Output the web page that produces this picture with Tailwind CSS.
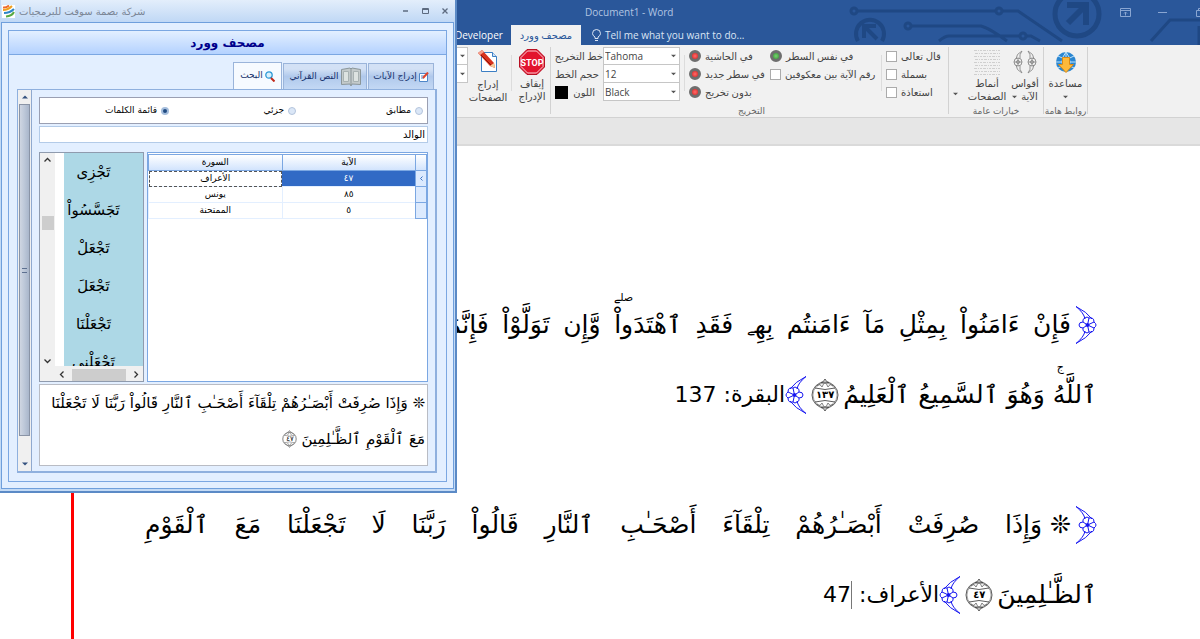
<!DOCTYPE html>
<html lang="ar">
<head>
    <meta charset="UTF-8">
    <meta name="viewport" content="width=device-width, initial-scale=1.0">
    <title>Document1 - Word</title>
    <script src="https://cdn.jsdelivr.net/npm/@tailwindcss/browser@4"></script>
</head>
<body class="h-screen overflow-hidden flex flex-col bg-white font-['Open_Sans','DejaVu_Sans',sans-serif] text-black">
    <svg class="hidden">
        <!-- ornate bracket around a verse -->
        <symbol id="bracket" viewBox="0 0 22 38">
            <g fill="none" stroke="#1414f0" stroke-width="1">
                <path d="M1 .5Q12 6 17 13M1 .5Q9 7 10 13M1 37.500Q12 32 17 25M1 37.500Q9 31 10 25"/>
                <path d="M10 12q2-2 4 0q5-1 5 4q4 3 0 6q0 5-5 4q-2 2-4 0q-3-1-2-4q-4 0-4-3t4-3q-1-3 2-4z"/>
                <circle cx="12.500" cy="19" r="1.500" fill="#1414f0"/>
                <path d="M12.500 19L8 16M12.500 19L8 22M12.500 19L14 12M12.500 19L14 26M12.500 19L19 16M12.500 19L19 22"/>
            </g>
        </symbol>
        <!-- verse number medallion -->
        <symbol id="medallion" viewBox="0 0 28 34">
            <g fill="none" stroke="#333" stroke-width=".8">
                <circle cx="14" cy="17" r="13"/>
                <circle cx="14" cy="17" r="12" stroke-width=".4"/>
                <path d="M4 10Q14 13 24 10M4 24Q14 21 24 24M10 4.500Q13 4 14 1Q15 4 18 4.500M10 29.500Q13 30 14 33Q15 30 18 29.500"/>
                <path d="M6 8q3-3 5 1q2-5 3-4q1-1 3 4q2-4 5-1M6 26q3 3 5-1q2 5 3 4q1 1 3-4q2 4 5 1" stroke-width=".6"/>
            </g>
        </symbol>
        <symbol id="arrow" viewBox="0 0 6 4"><path d="M0 .5h6L3 3.500z" fill="#555"/></symbol>
    </svg>

    <!-- title bar and ribbon tabs -->
    <header class="relative shrink-0 h-[45px] bg-[#2a579a] pl-[455px] text-white">
        <svg class="absolute right-0 top-0" width="370" height="45" viewBox="0 0 370 45" fill="none" stroke="#1f4884" stroke-width="3">
            <circle cx="24" cy="11" r="3"/>
            <path d="M27 11h138M172 11h16L232 41"/>
            <circle cx="169" cy="11" r="3"/>
            <circle cx="78" cy="26" r="3"/>
            <path d="M81 26h70q8 2 26 15M109 41q6-5 10-5h70M196 36h5l9 5"/>
            <circle cx="193" cy="36" r="3"/>
            <path d="M28 41a14 14 0 1 1 24 0" stroke-width="4"/>
            <path d="M34 38V26h12M35 27l12 12" stroke-width="4"/>
            <circle cx="247" cy="14" r="22" stroke-width="5"/>
            <path d="M237 5h19v20M255 6L238 23" stroke-width="6"/>
            <path d="M321 41l19-21h30"/>
            <path d="M369 26v19"/>
        </svg>
        <div class="relative flex items-center h-[25px] text-xs">
            <span class="flex-1 pl-[130px] text-[10px] text-[#b3c5e2]">Document1 - Word</span>
            <div class="flex items-center">
                <button aria-label="Ribbon display options" class="w-[38px]"><svg width="11" height="9" viewBox="0 0 11 9" fill="none" stroke="#8aa6d2"><path d="M.5.5h10v8H.5zM.5 2.500h10M5.500 7.500V4M4 5.500L5.500 4L7 5.500"/></svg></button>
                <button aria-label="Minimize" class="w-[38px]"><svg width="9" height="3"><path d="M0 1.500h9" stroke="#8aa6d2"/></svg></button>
                <button aria-label="Restore" class="w-[4px] overflow-hidden"><svg width="9" height="9" fill="none" stroke="#8aa6d2"><path d="M.5 2.500h6v6h-6zM2.500 2V.5h6v6h-2"/></svg></button>
            </div>
        </div>
        <nav class="relative flex h-5 items-center text-[10px] whitespace-nowrap">
            <a href="#" class="w-14">Developer</a>
            <a href="#" dir="rtl" class="flex h-full w-[70px] items-center justify-center bg-[#f1f1f1] text-[10px] text-[#2a579a]">مصحف وورد</a>
            <a href="#" class="ml-[11px] flex items-center gap-1 text-[#dbe5f4]">
                <svg width="9" height="13" viewBox="0 0 9 13" fill="none" stroke="currentColor"><path d="M3 9.500V8Q.5 6.500.5 4.500a4 4 0 0 1 8 0Q8.500 6.500 6 8V9.500zM3 11.500h3"/></svg>
                Tell me what you want to do...
            </a>
        </nav>
    </header>

    <!-- ribbon -->
    <section class="flex shrink-0 h-[73px] border-b border-[#d2d2d2] bg-[#f1f1f1] pl-[457px] pt-[2px] text-[10px] text-[#444] whitespace-nowrap">
        <div class="w-[11px] shrink-0">
            <button aria-label="Options" class="flex h-[18px] w-full items-center justify-center border border-l-0 border-[#c6c6c6] bg-white"><svg width="5" height="4"><use href="#arrow"/></svg></button>
            <button aria-label="More options" class="flex h-[18px] w-full items-center justify-center border border-t-0 border-l-0 border-[#c6c6c6] bg-white"><svg width="5" height="4"><use href="#arrow"/></svg></button>
        </div>
        <button class="flex w-10 shrink-0 flex-col items-center pt-[3px] leading-[13px]">
            <svg class="mb-[5px]" width="20" height="23" viewBox="0 0 20 23">
                <path d="M3.500 2.500h11l4 4v15h-15z" fill="#fff" stroke="#3c7fc4"/>
                <path d="M14.500 2.500v4h4" fill="#cfe2f5" stroke="#3c7fc4"/>
                <path d="M0 3l4-3L16 13l1 5l-5-2z" fill="#d8321e"/><path d="M0 3l4-3l2 2l-4 3z" fill="#f4a08c"/>
                <path d="M12 16l4-3l1 5z" fill="#f3cf9c"/><path d="M3 5l10 10" stroke="#8d1508"/>
            </svg>
            <span>إدراج</span><span>الصفحات</span>
        </button>
        <span class="mr-1 ml-[3px] mt-2 h-9 w-px bg-[#dcdcdc]"></span>
        <button class="flex w-8 shrink-0 flex-col items-center pt-[2px] leading-[13px]">
            <svg class="mb-[2px]" width="26" height="26" viewBox="0 0 26 26">
                <path d="M8 .5h10L25.500 8v10L18 25.500H8L.5 18V8z" fill="#e2142d" stroke="#b70f22"/>
                <path d="M8.500 2h9L24 8.500v9L17.500 24h-9L2 17.500v-9z" fill="none" stroke="#fff" stroke-width=".8"/>
                <text x="13" y="16.500" text-anchor="middle" font-family="Roboto" font-weight="700" font-size="9" fill="#fff">STOP</text>
            </svg>
            <span>إيقاف</span><span>الإدراج</span>
        </button>
        <span class="mr-1 ml-0.5 h-[67px] w-px bg-[#d2d2d2]"></span>

        <div class="flex w-[393px] shrink-0 flex-col">
            <div class="flex h-[54px]">
                <div class="grid w-[125px] shrink-0 grid-cols-[48px_77px] grid-rows-3">
                    <label for="font" dir="rtl" class="flex items-center">خط التخريج</label>
                    <div class="relative">
                        <select id="font" class="block h-[18px] w-full appearance-none border border-[#c6c6c6] bg-white px-px text-[10px] leading-4"><option>Tahoma</option></select>
                        <svg class="pointer-events-none absolute top-[7px] right-1" width="5" height="4"><use href="#arrow"/></svg>
                    </div>
                    <label for="size" dir="rtl" class="flex items-center pr-1">حجم الخط</label>
                    <div class="relative">
                        <select id="size" class="block h-[18px] w-full appearance-none border border-t-0 border-[#c6c6c6] bg-white px-px text-[10px] leading-4"><option>12</option></select>
                        <svg class="pointer-events-none absolute top-[7px] right-1" width="5" height="4"><use href="#arrow"/></svg>
                    </div>
                    <label for="color" dir="rtl" class="flex items-center justify-between pr-2"><span>اللون</span><span class="size-[13px] bg-black"></span></label>
                    <div class="relative">
                        <select id="color" class="block h-[18px] w-full appearance-none border border-t-0 border-[#c6c6c6] bg-white px-px text-[10px] leading-4"><option>Black</option></select>
                        <svg class="pointer-events-none absolute top-[7px] right-1" width="5" height="4"><use href="#arrow"/></svg>
                    </div>
                </div>
                <span class="mx-1 mt-2 h-9 w-px bg-[#dcdcdc]"></span>
                <div class="grid w-[81px] shrink-0 grid-rows-3">
                    <label class="flex items-center gap-1"><input type="radio" name="place" class="size-3 shrink-0 appearance-none rounded-full border-3 border-[#6e6e6e] bg-radial from-[#ff6a6a] to-[#d8131b]">في الحاشية</label>
                    <label class="flex items-center gap-1"><input type="radio" name="place" class="size-3 shrink-0 appearance-none rounded-full border-3 border-[#6e6e6e] bg-radial from-[#ff6a6a] to-[#d8131b]">في سطر جديد</label>
                    <label class="flex items-center gap-1"><input type="radio" name="place" class="size-3 shrink-0 appearance-none rounded-full border-3 border-[#6e6e6e] bg-radial from-[#ff6a6a] to-[#d8131b]">بدون تخريج</label>
                </div>
                <div class="grid w-[111px] shrink-0 grid-rows-3">
                    <label class="flex items-center gap-1"><input type="radio" name="place" checked class="size-3 shrink-0 appearance-none rounded-full border-3 border-[#6e6e6e] bg-radial from-[#7ad070] to-[#2f9a35]">في نفس السطر</label>
                    <label class="flex items-center gap-1"><input type="checkbox" class="size-[11px] shrink-0 appearance-none border border-[#ababab] bg-white">رقم الآية بين معكوفين</label>
                </div>
                <span class="mr-1 mt-2 h-9 w-px bg-[#dcdcdc]"></span>
                <div class="grid shrink-0 grid-rows-3">
                    <label class="flex items-center gap-1"><input type="checkbox" class="size-[11px] shrink-0 appearance-none border border-[#ababab] bg-white">قال تعالى</label>
                    <label class="flex items-center gap-1"><input type="checkbox" class="size-[11px] shrink-0 appearance-none border border-[#ababab] bg-white">بسملة</label>
                    <label class="flex items-center gap-1"><input type="checkbox" class="size-[11px] shrink-0 appearance-none border border-[#ababab] bg-white">استعاذة</label>
                </div>
            </div>
            <span class="text-center text-[9px] leading-5 text-[#666]">التخريج</span>
        </div>
        <span class="h-[67px] w-px bg-[#d2d2d2]"></span>

        <div class="flex w-[94px] shrink-0 flex-col">
            <div class="flex h-[56px] pl-1">
                <span class="flex w-3 items-end pb-[7px]"><svg width="5" height="4"><use href="#arrow"/></svg></span>
                <button class="flex w-[44px] flex-col items-center pt-[2px] leading-[13px]">
                    <svg class="mb-[2px]" width="26" height="26" viewBox="0 0 26 26" stroke="#cfcfcf" stroke-dasharray="3 1 1 1 2 1"><path d="M0 1.500h26M1 4.500h25M0 7.500h26M1 10.500h25M0 13.500h26M1 16.500h25M0 19.500h26M1 22.500h25M0 25.500h26"/></svg>
                    <span>أنماط</span><span>الصفحات</span>
                </button>
                <button class="flex w-[32px] flex-col items-center pt-[2px] leading-[13px]">
                    <svg class="mb-[2px]" width="24" height="26" viewBox="0 0 24 26" fill="none" stroke="#888" stroke-width=".9">
                        <path d="M9 2Q3 5 3 10M3 16Q3 21 9 24M9 2Q6 6 7 9M7 17Q6 20 9 24M15 2Q21 5 21 10M21 16Q21 21 15 24M15 2Q18 6 17 9M17 17Q18 20 15 24"/>
                        <circle cx="5" cy="13" r="4"/><circle cx="19" cy="13" r="4"/><circle cx="5" cy="13" r="1.500"/><circle cx="19" cy="13" r="1.500"/>
                        <path d="M1 13h8M5 9v8M15 13h8M19 9v8"/>
                    </svg>
                    <span>أقواس</span><span class="flex items-center gap-1"><svg width="5" height="4"><use href="#arrow"/></svg>الآية</span>
                </button>
            </div>
            <span class="text-center text-[9px] leading-4 text-[#666]">خيارات عامة</span>
        </div>
        <span class="h-[67px] w-px bg-[#d2d2d2]"></span>

        <div class="flex w-[43px] shrink-0 flex-col">
            <button class="flex h-[56px] shrink-0 flex-col items-center pt-1 leading-[13px]">
                <svg class="mb-1 shrink-0" width="22" height="22" viewBox="0 0 22 22">
                    <circle cx="11" cy="11" r="10" fill="#2a86d1"/>
                    <path d="M1 11h20M11 1v20M3 5q8 5 16 0M3 17q8-5 16 0M11 1Q3 11 11 21Q19 11 11 1" fill="none" stroke="#bfe3fa"/>
                    <path d="M7.500 6.500h7v7h4L11 21.500L3.500 13.500h4z" fill="#fdb93a" stroke="#d98914"/>
                </svg>
                <span>مساعدة</span><span class="flex h-[13px] items-center"><svg width="5" height="4"><use href="#arrow"/></svg></span>
            </button>
            <span class="text-center text-[9px] leading-4 text-[#666]">روابط هامة</span>
        </div>
        <span class="h-[67px] w-px bg-[#d2d2d2]"></span>
    </section>
    <div class="h-7 shrink-0 border-b-2 border-[#dadada] bg-[#e6e6e6]"></div>

    <!-- document page -->
    <main dir="rtl" class="ml-[71px] flex-1 border-l-3 border-[#ff0000] pr-[103px] pl-[71px] pt-36 font-['DejaVu_Sans',sans-serif] text-[25px] leading-[70px] whitespace-nowrap">
        <div class="flex h-[70px] items-center gap-1">
            <svg class="shrink-0" width="22" height="38"><use href="#bracket"/></svg>
            <p class="flex flex-1 justify-between"><span>فَإِنْ</span> <span>ءَامَنُواْ</span> <span>بِمِثْلِ</span> <span>مَآ</span> <span>ءَامَنتُم</span> <span>بِهِ<span class="text-[14px] leading-none">ے</span></span> <span>فَقَدِ</span> <span class="relative">ٱهْتَدَواْ<span class="absolute top-0 left-0 text-[11px] leading-4">صلے</span></span> <span>وَّإِن</span> <span>تَوَلَّوْاْ</span> <span>فَإِنَّمَا</span> <span>هُمْ</span> <span>فِى</span> <span>شِقَاقٍ</span> <span>فَسَيَكْفِيكَهُمُ</span></p>
        </div>
        <div class="flex h-[70px] items-center gap-1">
            <p class="flex gap-2"><span class="relative">ٱللَّهُ<span class="absolute top-0 left-1 text-[11px] leading-4">ج</span></span> <span>وَهُوَ</span> <span>ٱلسَّمِيعُ</span> <span>ٱلْعَلِيمُ</span></p>
            <span class="relative flex h-[34px] w-7 items-center justify-center text-[10px] font-bold"><svg class="absolute inset-0" width="28" height="34"><use href="#medallion"/></svg>١٣٧</span>
            <div class="flex items-center">
                <svg class="shrink-0 rotate-180" width="22" height="38"><use href="#bracket"/></svg>
                <p class="text-[22px]">البقرة: 137</p>
            </div>
        </div>
        <div class="mt-[60px] flex h-[70px] items-center gap-1">
            <svg class="shrink-0" width="22" height="38"><use href="#bracket"/></svg>
            <p class="flex flex-1 justify-between"><span>❊ وَإِذَا</span> <span>صُرِفَتْ</span> <span>أَبْصَـٰرُهُمْ</span> <span>تِلْقَآءَ</span> <span>أَصْحَـٰبِ</span> <span>ٱلنَّارِ</span> <span>قَالُواْ</span> <span>رَبَّنَا</span> <span>لَا</span> <span>تَجْعَلْنَا</span> <span>مَعَ</span> <span>ٱلْقَوْمِ</span></p>
        </div>
        <div class="flex h-[70px] items-center gap-1">
            <p>ٱلظَّـٰلِمِينَ</p>
            <span class="relative flex h-[34px] w-7 items-center justify-center text-[10px] font-bold"><svg class="absolute inset-0" width="28" height="34"><use href="#medallion"/></svg>٤٧</span>
            <div class="flex items-center">
                <svg class="shrink-0 rotate-180" width="22" height="38"><use href="#bracket"/></svg>
                <p class="flex items-center text-[22px]">الأعراف:&nbsp;<span class="border-r border-[#777] leading-7">47</span></p>
            </div>
        </div>
    </main>

    <!-- search window -->
    <section class="absolute top-0 left-0 flex h-[493px] w-[457px] flex-col border-r-2 border-b-2 border-[#5b8ac6] bg-[#c3daf5] pb-[2px] pl-[1px] font-['DejaVu_Sans',sans-serif] text-[9px]">
        <div class="flex h-[22px] shrink-0 items-center bg-linear-to-b from-[#e3eefb] to-[#c0d8f5] pl-px text-[10px] text-[#7b8696]">
            <svg class="mr-1 bg-white" width="13" height="13" viewBox="0 0 13 13" fill="none" stroke-width="2"><path d="M1 5Q6 5 10 1" stroke="#f0a020"/><path d="M2 8Q8 8 12 4" stroke="#2e86c8"/><path d="M4 11.500Q10 11 12 7" stroke="#58a942"/><path d="M1 2.500Q4 3 7 .5" stroke="#ee6a2c"/></svg>
            <h1 class="flex-1 text-left">شركة بصمة سوفت للبرمجيات</h1>
            <button aria-label="Minimize" class="w-5"><svg class="mx-auto" width="5" height="2"><path d="M0 1h5" stroke="#5d6b80" stroke-width="1.500"/></svg></button>
            <button aria-label="Maximize" class="w-5"><svg class="mx-auto" width="7" height="6" fill="none" stroke="#5d6b80"><path d="M.5.500h6v5h-6zM0 1.500h7"/></svg></button>
            <button aria-label="Close" class="w-5"><svg class="mx-auto" width="6" height="6" stroke="#5d6b80" stroke-width="1.300"><path d="M.5.500l5 5M5.500.500l-5 5"/></svg></button>
        </div>
        <div class="mr-px flex min-h-0 flex-1 flex-col border border-[#6f9fdc] bg-[#e3efff] px-[6px] pt-[7px] pb-[6px]">
            <div class="flex min-h-0 flex-1 flex-col border border-[#7ba7e2] pb-2">
                <h2 class="h-6 shrink-0 border-b border-[#7ba7e2] bg-linear-to-b from-[#e3efff] to-[#b4d2ff] text-center text-[12px] leading-6 font-bold text-[#00008b]">مصحف وورد</h2>
                <div dir="rtl" class="mt-[7px] flex h-[27px] shrink-0 items-end gap-px pr-3 whitespace-nowrap text-[#15306b]">
                    <button class="flex h-[26px] w-[66px] items-center justify-center gap-0.5 border border-b-0 border-[#9ab4da] bg-linear-to-b from-[#d3e1f5] from-20% via-[#b0c9ec] via-50% to-[#c3d8f4]">
                        <svg width="10" height="10" viewBox="0 0 10 10"><path d="M.5 1.500h8v8h-8z" fill="#fff" stroke="#4e86c8"/><path d="M2 4h4M2 6h3" stroke="#4e86c8"/><path d="M4 6L9 .5" stroke="#e0442c" stroke-width="2"/></svg>
                        إدراج الآيات
                    </button>
                    <button class="flex h-[26px] w-[84px] items-center justify-center gap-0.5 border border-b-0 border-[#9ab4da] bg-linear-to-b from-[#d3e1f5] from-20% via-[#b0c9ec] via-50% to-[#c3d8f4]">
                        <svg width="20" height="20" viewBox="0 0 20 20" fill="#c3cacb" stroke="#8b9699"><path d="M.5 2.500L9 1l1 1l1-1l8.500 1.500v15L11 17l-1 2l-1-2l-8.500.5zM10 2v16"/><path d="M2.500 4.500h5v10h-5zM12.500 4.500h5v10h-5z" fill="#dde3e1" stroke="#a8b2b2"/></svg>
                        النص القرآني
                    </button>
                    <button class="flex h-[27px] w-[49px] items-center justify-center gap-0.5 border border-b-0 border-[#9ab4da] bg-[#f6faff]">
                        <svg width="10" height="11" viewBox="0 0 10 11" fill="none"><circle cx="4" cy="4" r="3.200" fill="#d8f0fc" stroke="#2d9ad6" stroke-width="1.300"/><path d="M6 7l3.500 3.500" stroke="#c22a1c" stroke-width="2"/></svg>
                        البحث
                    </button>
                </div>
                <div class="mx-2 mr-[9px] flex min-h-0 flex-1 border-2 border-t border-l border-[#8fb0de]">
                    <!-- scrollbar -->
                    <div class="flex w-[14px] shrink-0 flex-col border-r border-[#8fa9cf] bg-[#f0f0f0]">
                        <button aria-label="Scroll up" class="flex h-[14px] items-center justify-center"><svg width="6" height="4"><path d="M0 3.500h6L3 .5z" fill="#34517f"/></svg></button>
                        <div class="mx-px flex h-[332px] items-center justify-center border border-[#8a94a6] bg-linear-to-r from-[#cfd6e2] via-[#bcc7d8] to-[#a9b6cb]"><span class="h-[5px] w-[5px] border-y border-[#5d7090]"></span></div>
                        <button aria-label="Scroll down" class="mt-auto flex h-[14px] items-center justify-center"><svg width="6" height="4"><path d="M0 .5h6L3 3.500z" fill="#34517f"/></svg></button>
                    </div>
                    <div class="flex min-w-0 flex-1 flex-col pt-[7px] pr-[7px] pb-[5px] pl-[7px]">
                        <div dir="rtl" class="flex h-[27px] shrink-0 items-center border border-[#9a9fb2] bg-white">
                            <label class="flex w-[127px] items-center gap-1 pr-1"><input type="radio" name="mode" class="size-2 appearance-none rounded-full border border-[#b4c4dc] bg-[#dbe7f7]">مطابق</label>
                            <label class="flex w-[127px] items-center gap-1 pr-1"><input type="radio" name="mode" class="size-2 appearance-none rounded-full border border-[#b4c4dc] bg-[#dbe7f7]">جزئي</label>
                            <label class="flex items-center gap-1 pr-1"><input type="radio" name="mode" checked class="size-2 appearance-none rounded-full border-2 border-[#a5bedd] bg-[#1f4a80]">قائمة الكلمات</label>
                        </div>
                        <input dir="rtl" aria-label="البحث" value="الوالد" class="mt-0.5 h-[17px] shrink-0 border border-[#b3cbe8] bg-white px-0.5 text-[10px]">
                        <div class="mt-[9px] flex h-[230px] shrink-0 gap-[3px]">
                            <div class="grid w-[105px] shrink-0 grid-cols-[15px_1fr] grid-rows-[1fr_13px] overflow-hidden border border-[#8f9bae] bg-[#f0f0f0]">
                                <div class="flex flex-col items-center justify-between py-1">
                                    <svg width="7" height="5" fill="none" stroke="#333" stroke-width="1.300"><path d="M.5 4.500l3-3l3 3"/></svg>
                                    <span class="mt-[54px] h-[14px] w-3 bg-[#cdcdcd]"></span>
                                    <svg class="mt-auto" width="7" height="5" fill="none" stroke="#333" stroke-width="1.300"><path d="M.5.500l3 3l3-3"/></svg>
                                </div>
                                <ul dir="rtl" class="ml-[9px] h-[213px] overflow-hidden bg-[#add8e6] pr-5 text-center text-[15px] leading-[38px] shadow-[-9px_0_0_white]">
                                    <li>تَجْزِى</li>
                                    <li>تَجَسَّسُواْ</li>
                                    <li>تَجْعَلْ</li>
                                    <li>تَجْعَلَ</li>
                                    <li>تَجْعَلْنَا</li>
                                    <li>تَجْعَلْنِى</li>
                                </ul>
                                <div class="col-start-2 flex items-center justify-between px-1">
                                    <svg width="5" height="7" fill="none" stroke="#333" stroke-width="1.300"><path d="M4.500.500l-3 3l3 3"/></svg>
                                    <span class="h-3 w-[54px] bg-[#cdcdcd]"></span>
                                    <svg width="5" height="7" fill="none" stroke="#333" stroke-width="1.300"><path d="M.5.500l3 3l-3 3"/></svg>
                                </div>
                            </div>
                            <div class="min-w-0 flex-1 border border-[#7ba7e2] bg-white pt-px">
                                <table dir="rtl" class="w-full table-fixed border-collapse text-center">
                                    <tr class="h-4 bg-linear-to-b from-white to-[#cfe2fd]">
                                        <th class="w-[11px] border border-[#7ba7e2]"></th>
                                        <th class="border border-[#7ba7e2] font-normal">الآية</th>
                                        <th class="border border-[#7ba7e2] font-normal">السورة</th>
                                    </tr>
                                    <tr class="h-4">
                                        <td class="border border-[#7ba7e2] bg-[#dceafe] leading-3"><svg class="mx-auto" width="4" height="5" fill="none" stroke="#3b72c4"><path d="M3.500.500l-2 2l2 2"/></svg></td>
                                        <td class="bg-[#316ac5] text-white">٤٧</td>
                                        <td class="outline-1 -outline-offset-1 outline-dashed outline-[#555]">الأعراف</td>
                                    </tr>
                                    <tr class="h-4">
                                        <td class="border border-[#7ba7e2] bg-[#dceafe]"></td>
                                        <td class="border border-[#e3efff]">٨٥</td>
                                        <td class="border border-[#e3efff]">يونس</td>
                                    </tr>
                                    <tr class="h-4">
                                        <td class="border border-[#7ba7e2] bg-[#dceafe]"></td>
                                        <td class="border border-[#e3efff]">٥</td>
                                        <td class="border border-[#e3efff]">الممتحنة</td>
                                    </tr>
                                </table>
                            </div>
                        </div>
                        <div dir="rtl" class="mt-[2px] min-h-0 flex-1 overflow-hidden border border-[#b9bcc4] bg-white px-0.5 text-[15px] leading-9 whitespace-nowrap">
                            <p>❊ وَإِذَا صُرِفَتْ أَبْصَـٰرُهُمْ تِلْقَآءَ أَصْحَـٰبِ ٱلنَّارِ قَالُواْ رَبَّنَا لَا تَجْعَلْنَا</p>
                            <p class="flex items-center gap-1">مَعَ ٱلْقَوْمِ ٱلظَّـٰلِمِينَ <span class="relative flex h-[18px] w-[15px] items-center justify-center text-[7px]"><svg class="absolute inset-0" width="15" height="18"><use href="#medallion"/></svg>٤٧</span></p>
                        </div>
                    </div>
                </div>
            </div>
        </div>
    </section>
</body>
</html>
